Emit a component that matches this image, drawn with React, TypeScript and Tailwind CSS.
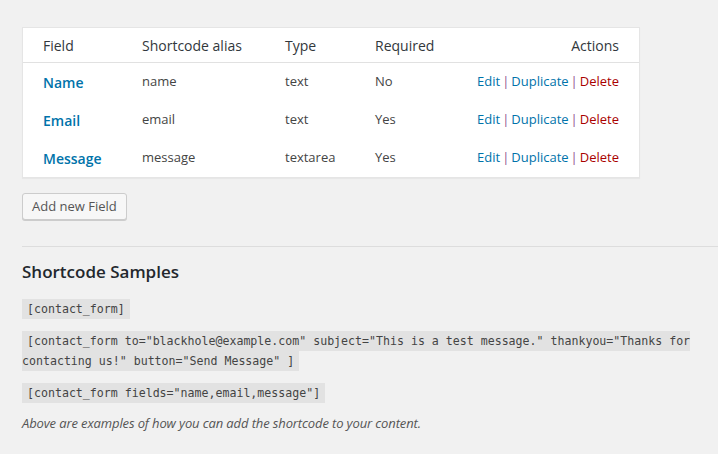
import React from "react";

const fields = [
  { label: "Name", alias: "name", type: "text", required: "No" },
  { label: "Email", alias: "email", type: "text", required: "Yes" },
  { label: "Message", alias: "message", type: "textarea", required: "Yes" },
];

const Code = ({ children }: { children: React.ReactNode }) => (
  <code className="bg-[#e2e2e2] px-[5px] py-[3px] font-['DejaVu_Sans_Mono',monospace] text-[11.6px] leading-none text-[#444]">
    {children}
  </code>
);

const App = () => {
  return (
    <div className="min-h-screen bg-[#f1f1f1] pl-[22px] pt-[27px] font-['Open_Sans',sans-serif] text-[13px] text-[#444]">
      <div className="w-[618px] border border-[#e5e5e5] bg-white shadow-[0_1px_1px_rgba(0,0,0,0.04)]">
        <div className="flex h-[35px] items-center border-b border-[#e1e1e1] px-[20px] text-[14px] text-[#32373c]">
          <div className="w-[99px]">Field</div>
          <div className="w-[143px]">Shortcode alias</div>
          <div className="w-[90px]">Type</div>
          <div className="flex-1">Required</div>
          <div>Actions</div>
        </div>
        {fields.map((f) => (
          <div key={f.alias} className="flex h-[38px] items-center px-[20px]">
            <div className="w-[99px] text-[14px] font-semibold text-[#0073aa]">
              {f.label}
            </div>
            <div className="w-[143px]">{f.alias}</div>
            <div className="w-[90px]">{f.type}</div>
            <div className="flex-1">{f.required}</div>
            <div className="flex items-center">
              <span className="text-[#0073aa]">Edit</span>
              <span className="mx-[2px] text-[#8f4f8f]">|</span>
              <span className="text-[#0073aa]">Duplicate</span>
              <span className="mx-[2px] text-[#8f4f8f]">|</span>
              <span className="text-[#a00]">Delete</span>
            </div>
          </div>
        ))}
      </div>

      <button className="mt-[15px] h-[27px] rounded-[3px] border border-[#ccc] bg-[#f7f7f7] px-[9px] text-[13px] text-[#555] shadow-[0_1px_0_#ccc]">
        Add new Field
      </button>

      <hr className="mt-[26px] border-t border-[#dddddd]" />

      <h3 className="mt-[13px] text-[17px] leading-[24px] font-semibold text-[#23282d]">
        Shortcode Samples
      </h3>

      <p className="mt-[14px] leading-[20px]">
        <Code>[contact_form]</Code>
      </p>
      <p className="mt-[12px] leading-[20px]">
        <Code>
          [contact_form to="blackhole@example.com" subject="This is a test
          message." thankyou="Thanks for contacting us!" button="Send Message" ]
        </Code>
      </p>
      <p className="mt-[12px] leading-[20px]">
        <Code>[contact_form fields="name,email,message"]</Code>
      </p>
      <p className="mt-[11px] leading-[20px] tracking-[-0.12px] text-[#555] italic">
        Above are examples of how you can add the shortcode to your content.
      </p>
    </div>
  );
};

export default App;
